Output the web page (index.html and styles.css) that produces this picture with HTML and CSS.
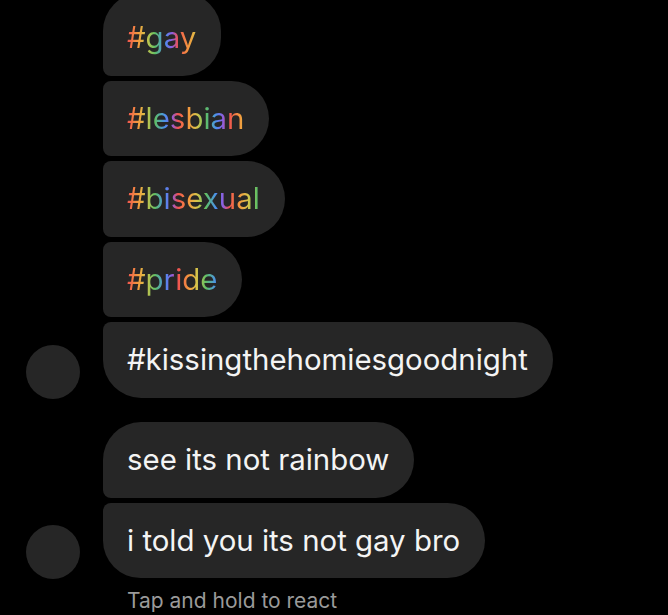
FILE: index.html
```html
<!DOCTYPE html>
<html lang="en">
  <head>
    <meta charset="UTF-8" />
    <meta name="viewport" content="width=device-width, initial-scale=1.0" />
    <title>Chat</title>
    <link rel="stylesheet" href="styles.css">
  </head>
  <body>
    <div class="thread">
      <div class="group group-top">
        <div class="avatar"></div>
        <div class="stack">
          <div class="bubble first"><span class="rainbow">#gay</span></div>
          <div class="bubble"><span class="rainbow">#lesbian</span></div>
          <div class="bubble"><span class="rainbow">#bisexual</span></div>
          <div class="bubble"><span class="rainbow">#pride</span></div>
          <div class="bubble last">#kissingthehomiesgoodnight</div>
        </div>
      </div>
      <div class="group">
        <div class="avatar"></div>
        <div class="stack">
          <div class="bubble first">see its not rainbow</div>
          <div class="bubble last">i told you its not gay bro</div>
        </div>
      </div>
      <div class="hint">Tap and hold to react</div>
    </div>
  </body>
</html>
```

FILE: styles.css
```css
body {
  margin: 0;
  padding: 0;
  background-color: #000;
  font-family: Inter, "Noto Sans", sans-serif;
  color: #f4f4f4;
  overflow: hidden;
}
.thread {
  padding: 0 0 0 26px;
}
.group {
  display: flex;
  align-items: flex-end;
  gap: 23px;
  margin-bottom: 24.5px;
}
.avatar {
  width: 54px;
  height: 54px;
  border-radius: 50%;
  background-color: #262626;
  flex-shrink: 0;
  margin-bottom: -1px;
}
.stack {
  display: flex;
  flex-direction: column;
  align-items: flex-start;
  gap: 5px;
}
.bubble {
  background-color: #262626;
  border-radius: 8px 38px 38px 8px;
  padding: 21px 25px 20.5px 24px;
  font-size: 29.4px;
  line-height: 34px;
  white-space: nowrap;
}
.bubble.first {
  border-top-left-radius: 38px;
}
.bubble.last {
  border-bottom-left-radius: 38px;
}
.group-top .bubble.first {
  margin-top: -7px;
  padding-top: 28px;
}
.rainbow {
  display: inline-block;
  color: transparent;
  background-image: repeating-linear-gradient(90deg,
    #f0524f 0px,
    #f39a3e 11px,
    #d6c54a 19px,
    #5fbf64 28px,
    #4a8ff0 38px,
    #8e5de0 45px,
    #f0524f 51px);
  -webkit-background-clip: text;
  background-clip: text;
}
.hint {
  margin: -15px 0 0 101px;
  font-size: 21px;
  line-height: 26px;
  color: #9a9a9a;
}
```
